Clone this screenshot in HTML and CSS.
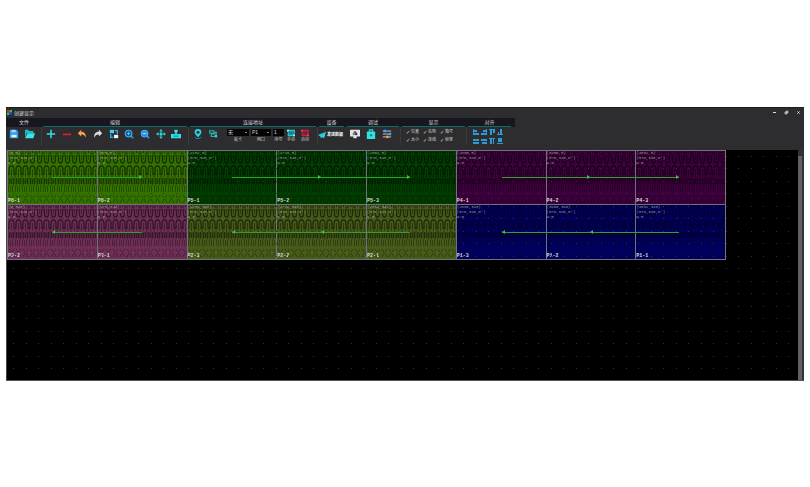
FILE: index.html
```html
<!DOCTYPE html>
<html lang="zh-CN">
<head>
  <meta charset="UTF-8">
  <meta name="viewport" content="width=device-width, initial-scale=1.0">
  <title>创建显示</title>
  <link rel="stylesheet" href="styles.css">
</head>
<body>

<div class="window">
  <header class="titlebar">
    <svg class="logo" viewBox="0 0 6 6"><path fill="#f02020" d="M0 0h3v3H0z"/><path fill="#20d030" d="M3 0h3v3H3z"/><path fill="#20c828" d="M0 3h3v3H0z"/><path fill="#2038f0" d="M3 3h3v3H3z"/></svg>
    <h1>创建显示</h1>
    <button class="win-btn" aria-label="最小化"><svg viewBox="0 0 5 5"><path fill="#ddd" d="M1 2h3v1H1z"/></svg></button>
    <button class="win-btn" aria-label="还原"><svg viewBox="0 0 5 5"><path fill="#777" stroke="#ccc" stroke-width=".7" d="M2 1h2v2H2zM1 2h2v2H1z"/></svg></button>
    <button class="win-btn" aria-label="关闭"><svg viewBox="0 0 5 5"><path stroke="#eee" d="M1.5 1.5l2 2m0-2l-2 2"/></svg></button>
  </header>

  <div class="ribbon">
    <section class="group file">
      <h2>文件</h2>
      <div class="tools">
        <button class="tool" aria-label="保存"><svg viewBox="0 0 12 12"><path fill="#2f9cf0" d="M1 1h8l2 2v8H1z"/><path fill="#9fdcff" d="M3 1h5v3H3z"/><path fill="#e4f5ff" d="M3 7h6v3H3z"/></svg></button>
        <button class="tool" aria-label="打开"><svg viewBox="0 0 12 12"><path fill="#1fb9c4" d="M0 1h4l1 1.500h5V5H2l-2 5z"/><path fill="#35e6ea" d="M3 5h9l-2 6H0z"/></svg></button>
      </div>
    </section>

    <section class="group edit">
      <h2>编辑</h2>
      <div class="tools">
        <button class="tool" aria-label="添加"><svg viewBox="0 0 12 12"><path stroke="#2fe0e6" stroke-width="1.800" d="M6 1v10M1 6h10"/></svg></button>
        <button class="tool" aria-label="删除"><svg viewBox="0 0 12 12"><path stroke="#d8213f" stroke-width="1.900" d="M1 6.500h10"/></svg></button>
        <button class="tool" aria-label="撤销"><svg viewBox="0 0 12 12"><path fill="#f5a04a" d="M1 5l4-4v2.400c4 0 6 2.600 5.500 7C9 7 8 6.400 5 6.500V9z"/></svg></button>
        <button class="tool" aria-label="重做"><svg viewBox="0 0 12 12"><path fill="#dedede" d="M11 5L7 1v2.400c-4 0-6 2.600-5.500 7C3 7 4 6.400 7 6.500V9z"/></svg></button>
        <button class="tool" aria-label="替换"><svg viewBox="0 0 12 12"><path fill="#34d8e8" d="M1 1h5v4H1z"/><path fill="#e5f6ff" d="M6 7h5v4H6z"/><path fill="none" stroke="#35a5f3" stroke-width="1.600" d="M7 2h3v4M5 10H2V6"/></svg></button>
        <button class="tool" aria-label="放大"><svg viewBox="0 0 12 12"><circle cx="5.500" cy="5.500" r="3.900" fill="#174c80" stroke="#3ba1f2" stroke-width="1.600"/><path stroke="#3ba1f2" stroke-width="1.700" d="M8 8l3 3"/><path stroke="#48e5ef" d="M5.500 3.500v4M3.500 5.500h4"/></svg></button>
        <button class="tool" aria-label="缩小"><svg viewBox="0 0 12 12"><circle cx="5.500" cy="5.500" r="3.900" fill="#2d8ce0" stroke="#3ba1f2" stroke-width="1.600"/><path stroke="#3ba1f2" stroke-width="1.700" d="M8 8l3 3"/><path stroke="#baf2ff" d="M3.500 5.500h4"/></svg></button>
        <button class="tool" aria-label="移动"><svg viewBox="0 0 12 12"><path fill="#2fdde3" d="M6 0l2 3H4zM6 12l2-3H4zM0 6l3-2v4zM12 6L9 4v4zM5 4h2v1h1v2H7v1H5V7H4V5h1z"/></svg></button>
        <button class="tool" aria-label="布局"><svg viewBox="0 0 12 12"><path fill="#32dfe6" d="M4 1h4v3H7v2h5v5H0V6h5V4H4z"/><path fill="#126b78" d="M3 8h6v1H3z"/></svg></button>
      </div>
    </section>

    <section class="group address">
      <h2>连接地址</h2>
      <div class="tools">
        <button class="tool" aria-label="定位"><svg viewBox="0 0 12 12"><path fill="#2bd6e3" d="M6 0a4 4 0 0 1 4 4c0 2-2 4-4 6-2-2-4-4-4-6a4 4 0 0 1 4-4z"/><circle cx="6" cy="4" r="1.800" fill="#17384a"/><path fill="none" stroke="#2e94e8" d="M3 9.500C2 11 4 11.500 6 11.500s4-.5 3-2"/></svg></button>
        <button class="tool" aria-label="走线"><svg viewBox="0 0 12 12"><path fill="none" stroke="#25b7b4" stroke-width="1.300" d="M2 2h5v3H2zM7 4h3v2H4v3h4"/><path fill="#35d6d1" d="M8 7h3v3H8z"/></svg></button>
        <label class="field"><select><option>无</option></select><span>板卡</span></label>
        <label class="field port"><select><option>P1</option></select><span>网口</span></label>
        <label class="field number"><input type="text" value="1"><span>序号</span></label>
        <button class="tool captioned"><svg viewBox="0 0 12 12"><path fill="none" stroke="#25c7cf" stroke-width="1.800" d="M1 2h10v4H2v4h9"/><path fill="#1c8f98" d="M3 3h7v2H3zM3 7h7v2H3z"/><path fill="#6cf4f4" d="M0 1h3v3H0zM9 8h3v3H9z"/></svg><span>手动</span></button>
        <button class="tool captioned"><svg viewBox="0 0 12 12"><path fill="none" stroke="#c82040" stroke-width="1.800" d="M1 2h10v4H2v4h9"/><path fill="#8c1a30" d="M3 3h7v2H3zM3 7h7v2H3z"/><path fill="#ef3857" d="M0 1h3v3H0zM9 8h3v3H9z"/></svg><span>自动</span></button>
      </div>
    </section>

    <section class="group device">
      <h2>设备</h2>
      <div class="tools">
        <button class="send"><svg viewBox="0 0 12 12"><path fill="#2fdde6" d="M0 6l12-5-3 10-3-2-2 2-.5-3z"/><path stroke="#17737c" stroke-width=".7" d="M3.500 8L11 2"/></svg>发送数据</button>
      </div>
    </section>

    <section class="group debug">
      <h2>调试</h2>
      <div class="tools">
        <button class="tool" aria-label="测试画面"><svg viewBox="0 0 12 12"><path fill="#e6e2e6" d="M0 1h12v8H8v2H4V9H0z"/><circle cx="6" cy="3.800" r="1.500" fill="#e22"/><circle cx="4.600" cy="6" r="1.500" fill="#2b3"/><circle cx="7.400" cy="6" r="1.500" fill="#22e"/></svg></button>
        <button class="tool" aria-label="锁定"><svg viewBox="0 0 12 12"><path fill="none" stroke="#2bd5d8" stroke-width="1.300" d="M4 4V1h4v3"/><rect x="1" y="3" width="10" height="9" rx="1" fill="#2ee4e2"/><path fill="#0d6d70" d="M5.500 6h1v1h1v1h-1v1h-1V8h-1V7h1z"/></svg></button>
        <button class="tool" aria-label="参数"><svg viewBox="0 0 12 12"><path stroke="#e0e0e0" d="M1 2.500h10M1 6h10M1 9.500h10"/><path fill="#3aa8f4" d="M2 1h3v3H2zM8 4.500h3v3H8z"/><path fill="#f49a55" d="M5 8h3v3H5z"/></svg></button>
      </div>
    </section>

    <section class="group show">
      <h2>显示</h2>
      <div class="checks">
        <label><input type="checkbox" checked>位置</label>
        <label><input type="checkbox" checked>名称</label>
        <label><input type="checkbox" checked>箱号</label>
        <label><input type="checkbox" checked>大小</label>
        <label><input type="checkbox" checked>连线</label>
        <label><input type="checkbox" checked>帧率</label>
      </div>
    </section>

    <section class="group align">
      <h2>对齐</h2>
      <div class="aligns">
        <button aria-label="左对齐"><svg viewBox="0 0 6 6"><path d="M0 0h1v6H0zM1 1h3v2H1zM1 4h5v2H1z"/></svg></button>
        <button aria-label="右对齐"><svg viewBox="0 0 6 6"><path d="M5 0h1v6H5zM2 1h3v2H2zM0 4h5v2H0z"/></svg></button>
        <button aria-label="上对齐"><svg viewBox="0 0 6 6"><path d="M0 0h6v1H0zM1 1h2v5H1zM4 1h2v3H4z"/></svg></button>
        <button aria-label="下对齐"><svg viewBox="0 0 6 6"><path d="M0 5h6v1H0zM1 3h1v2H1zM3 0h2v5H3z"/></svg></button>
        <button aria-label="水平居中"><svg viewBox="0 0 6 6"><path d="M0 1h6v2H0zM0 4h6v2H0z"/></svg></button>
        <button aria-label="垂直居中"><svg viewBox="0 0 6 6"><path d="M0 1h6v2H0zM1 4h5v2H1z"/></svg></button>
        <button aria-label="水平等距"><svg viewBox="0 0 6 6"><path d="M0 0h6v1H0zM1 1h2v5H1zM4 1h1v5H4z"/></svg></button>
        <button aria-label="垂直等距"><svg viewBox="0 0 6 6"><path d="M1 0h4v4H1zM0 5h6v1H0z"/></svg></button>
      </div>
    </section>
  </div>

  <main class="workspace">
    <div class="canvas">
      <div class="wall" id="wall"></div>
      <svg class="dots" width="100%" height="100%">
        <defs>
          <pattern id="dotPattern" width="25" height="25" patternUnits="userSpaceOnUse">
            <path fill="#333" d="M6 6h1v1H6zM19 6h1v1h-1zM6 18h1v1H6zM19 18h1v1h-1z"/>
          </pattern>
        </defs>
        <rect width="100%" height="100%" fill="url(#dotPattern)"/>
      </svg>
    </div>
    <div class="scrollbar"><span></span></div>
  </main>
</div>

<svg class="defs" width="0" height="0">
  <defs>
    <pattern id="moire" width="7" height="55" patternUnits="userSpaceOnUse">
      <g fill="none" stroke="#000">
        <path stroke-opacity=".5" d="M1 0v3M3.500 0v2M6 0v3"/>
        <path stroke-opacity=".55" stroke-width="1.300" d="M1.500 4v5q0 3 2 3t2-3V4"/>
        <path stroke-opacity=".35" d="M3.500 4v5M0 2v4M7 2v4"/>
        <path stroke-opacity=".55" stroke-width="1.300" d="M1 24v-5q0-4 2.500-4t2.500 4v5"/>
        <path stroke-opacity=".4" d="M3.500 18v8M0 22v5M7 22v5"/>
        <path stroke-opacity=".35" d="M1.500 27v7M3.500 28v5M5.500 27v7"/>
        <path stroke-opacity=".3" d="M.5 34v7M2.500 35v6M4.500 34v7"/>
        <path stroke-opacity=".35" d="M1 44l2 3M6 44l-2 3M3 48l-2 4M4 48l2 4"/>
      </g>
      <path fill-opacity=".22" d="M0 27h7v6H0z"/>
    </pattern>
  </defs>
</svg>

<script>
  const chains = [
    { port: 6, row: 0, col: 0, count: 2, color: "lime" },
    { port: 5, row: 0, col: 2, count: 3, color: "green" },
    { port: 4, row: 0, col: 5, count: 3, color: "purple" },
    { port: 3, row: 1, col: 0, count: 2, color: "plum" },
    { port: 2, row: 1, col: 2, count: 3, color: "olive" },
    { port: 1, row: 1, col: 5, count: 3, color: "blue" }
  ];

  const wall = document.getElementById("wall");

  chains.forEach(chain => {
    const block = document.createElement("div");
    block.className = `chain ${chain.color} span-${chain.count}`;

    let cells = "";
    for (let i = 0; i < chain.count; i++) {
      const x = (chain.col + i) * 576;
      const index = chain.row === 0 ? i + 1 : chain.count - i;
      cells += `
        <div class="cell">
          <svg class="texture" width="100%" height="100%"><rect width="100%" height="100%" fill="url(#moire)"/></svg>
          <p>(${x},${chain.row * 340})<br>(576,340,0°)<br>W:0</p>
          <b>P${chain.port}-${index}</b>
        </div>`;
    }

    let arrows = "";
    for (let i = 1; i < chain.count; i++) {
      arrows += "<i></i>";
    }

    block.innerHTML = `${cells}<div class="route ${chain.row === 0 ? "right" : "left"}">${arrows}</div>`;
    wall.appendChild(block);
  });
</script>

</body>
</html>
```

FILE: styles.css
```css
:root {
  --panel: #2d2d2f;
  --tabs: #171720;
  --teal: #12686b;
  --text: #d4d4d4;
}

* {
  box-sizing: border-box;
  margin: 0;
  padding: 0;
}

body {
  background-color: #fff;
  color: var(--text);
  font-family: "Liberation Sans", "Noto Sans CJK SC", sans-serif;
  font-size: 5px;
  line-height: 6px;
  min-height: 100vh;
  padding: 0 6px;
  display: flex;
  flex-direction: column;
  justify-content: center;
}

button,
input,
select {
  font: inherit;
  color: inherit;
  background: none;
  border: none;
}

svg {
  display: block;
  flex-shrink: 0;
}

.window {
  background-color: var(--panel);
  border-bottom: 1px solid #555;
}

.titlebar {
  display: flex;
  align-items: center;
  gap: 2px;
  height: 11px;
  padding-left: 1px;
  border-top: 1px solid #1c1c1e;
}

.titlebar h1 {
  flex: 1;
  font-size: 5px;
  font-weight: normal;
}

.logo {
  width: 5px;
  height: 5px;
}

.win-btn {
  width: 10px;
  height: 10px;
  padding: 2px;
}

.win-btn svg {
  width: 5px;
  height: 5px;
}

/* ribbon */
.ribbon {
  display: grid;
  grid-template-columns: 35px 147px 129px 28px 55px 66px 46px;
  padding-left: 1px;
  height: 32px;
  background: linear-gradient(var(--tabs), var(--tabs)) no-repeat 0 0 / 509px 9px;
}

.group h2 {
  height: 9px;
  margin: 0 2px 0 1px;
  border-bottom: 1px solid var(--teal);
  font-size: 5px;
  line-height: 8px;
  font-weight: normal;
  text-align: center;
}

.file h2 {
  border-color: transparent;
}

.tools {
  display: flex;
  align-items: flex-start;
  height: 18px;
  padding: 2px 2px 0 1px;
}

.file .tools,
.edit .tools,
.address .tools,
.debug .tools,
.show .checks {
  border-right: 1px solid #3b3b3d;
}

.tool {
  display: flex;
  justify-content: center;
  width: 16px;
}

.tool svg {
  width: 10px;
  height: 10px;
}

.file .tools {
  padding-left: 0;
  gap: 2px;
}

.file .tool {
  width: 14px;
}

.edit .tools {
  padding-right: 4px;
}

.edit .tool {
  flex: 1;
}

.field {
  display: flex;
  flex-direction: column;
  align-items: center;
  width: 22px;
  margin-left: 7px;
}

.field + .field {
  margin-left: 2px;
}

.field.port {
  width: 20px;
}

.field.number {
  width: 11px;
}

.field select,
.field input {
  width: 100%;
  height: 7px;
  padding-left: 1px;
  background-color: #050505;
  appearance: none;
}

.field select {
  background-image: linear-gradient(#888, #888);
  background-repeat: no-repeat;
  background-position: right 2px center;
  background-size: 2px 1px;
}

.field span,
.captioned span {
  font-size: 4px;
  line-height: 8px;
}

.address .tool {
  width: 15px;
}

.address .captioned {
  flex-direction: column;
  align-items: center;
  justify-content: flex-start;
  width: 14px;
}

.captioned svg {
  width: 8px;
  height: 8px;
}

.captioned span {
  line-height: 6px;
}

.send {
  display: flex;
  align-items: center;
  gap: 1px;
  height: 12px;
  color: #fff;
  font-size: 4px;
  font-weight: bold;
  white-space: nowrap;
}

.send svg {
  width: 8px;
  height: 8px;
}

.device .tools {
  padding-left: 0;
}

.checks {
  display: grid;
  grid-template-columns: repeat(3, 17px);
  grid-auto-rows: 8px;
  height: 18px;
  padding: 1px 0 0 5px;
}

.checks label {
  display: flex;
  align-items: center;
  gap: 1px;
  font-size: 4px;
}

.checks input {
  width: 4px;
  height: 4px;
  appearance: none;
}

.checks input:checked::before {
  content: "✓";
  display: block;
  font: 5px/4px "DejaVu Sans", sans-serif;
}

.aligns {
  display: grid;
  grid-template-columns: repeat(4, 8px);
  grid-auto-rows: 9px;
  padding: 1px 0 0 5px;
}

.aligns button {
  padding: 1px;
}

.aligns svg {
  width: 6px;
  height: 6px;
  fill: #2e9bd8;
}

/* canvas */
.workspace {
  display: flex;
  height: 230px;
}

.canvas {
  position: relative;
  flex: 1;
  background-color: #000;
  border-left: 1px solid #444;
  padding-right: 72px;
}

.dots {
  position: absolute;
  top: 0;
  left: 0;
}

.wall {
  display: grid;
  grid-template-columns: repeat(8, 1fr);
  border-right: 1px solid #777;
}

.chain {
  position: relative;
  display: flex;
  height: 55px;
}

.span-2 {
  grid-column: span 2;
}

.span-3 {
  grid-column: span 3;
}

.lime { background-color: #347200; }
.green { background-color: #003c00; }
.purple { background-color: #3c003c; }
.plum { background-color: #6e2e56; }
.olive { background-color: #465c18; }
.blue { background-color: #000060; }

.cell {
  position: relative;
  flex: 1;
  display: flex;
  flex-direction: column;
  justify-content: space-between;
  border-left: 1px solid #72727a;
  border-bottom: 1px solid #72727a;
  font-family: "Liberation Mono", monospace;
  font-size: 4px;
  line-height: 5px;
}

.chain:first-child .cell,
.chain:nth-child(2) .cell,
.chain:nth-child(3) .cell {
  border-top: 1px solid #72727a;
}

.texture {
  position: absolute;
  top: 0;
  left: 0;
}

.cell p {
  position: relative;
  color: #b4b4b4;
  opacity: 0.8;
}

.cell b {
  position: relative;
  color: #ddd;
  font-size: 5px;
}

/* signal route drawn over the cells, from centre to centre */
.route {
  position: absolute;
  top: 27px;
  left: 17%;
  right: 17%;
  height: 1px;
  display: flex;
  background-color: #2f9f2f;
}

.span-2 .route {
  left: 25%;
  right: 25%;
}

.route i {
  flex: 1;
  display: flex;
  align-items: center;
}

.route.right i {
  justify-content: flex-end;
}

.route i::before {
  content: "";
  border: 2px solid transparent;
}

.route.right i::before {
  border-left: 3px solid #3fc03f;
  border-right: none;
}

.route.left i::before {
  border-right: 3px solid #3fc03f;
  border-left: none;
}

.scrollbar {
  width: 6px;
  padding: 6px 2px 0 0;
  background-color: #303036;
}

.scrollbar span {
  display: block;
  height: 100%;
  background-color: #606062;
}

.defs {
  position: absolute;
}
```
